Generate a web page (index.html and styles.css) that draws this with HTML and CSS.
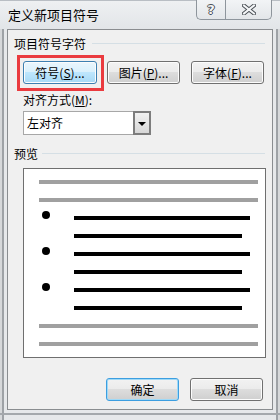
FILE: index.html
```html
<!DOCTYPE html>
<html lang="zh">
<head>
<meta charset="utf-8">
<link rel="stylesheet" href="styles.css">
</head>
<body>
<div class="window">
  <div class="titlebar">
    <span class="title">定义新项目符号</span>
    <div class="caption-btns">
      <div class="cap help">?</div>
      <div class="cap close">
        <svg width="14" height="11" viewBox="0 0 14 11"><path d="M2 1.5 L12 9.5 M12 1.5 L2 9.5" stroke="#4a4f55" stroke-width="4" stroke-linecap="square"/><path d="M2 1.5 L12 9.5 M12 1.5 L2 9.5" stroke="#f4f6f8" stroke-width="2" stroke-linecap="square"/></svg>
      </div>
    </div>
  </div>
  <div class="client">
    <div class="legend"><span>项目符号字符</span><i class="rule"></i></div>
    <div class="btnrow">
      <span class="highlight"><button class="btn hot">符号(<u>S</u>)...</button></span>
      <button class="btn">图片(<u>P</u>)...</button>
      <button class="btn">字体(<u>F</u>)...</button>
    </div>
    <div class="label">对齐方式(<u>M</u>):</div>
    <div class="select">
      <span class="value">左对齐</span>
      <span class="drop"><i class="arrow"></i></span>
    </div>
    <div class="legend legend2"><span>预览</span><i class="rule"></i></div>
    <div class="preview">
      <div class="row"><b class="gray"></b></div>
      <div class="row"><b class="gray"></b></div>
      <div class="row"><i class="dot"></i><b class="long"></b></div>
      <div class="row"><b class="short"></b></div>
      <div class="row"><i class="dot"></i><b class="long"></b></div>
      <div class="row"><b class="short"></b></div>
      <div class="row"><i class="dot"></i><b class="long"></b></div>
      <div class="row"><b class="short"></b></div>
      <div class="row"><b class="gray"></b></div>
      <div class="row"><b class="gray"></b></div>
    </div>
    <div class="footer">
      <button class="btn default">确定</button>
      <button class="btn">取消</button>
    </div>
  </div>
</div>
</body>
</html>
```

FILE: styles.css
```css
* { box-sizing: border-box; }
html, body { margin: 0; padding: 0; }
body {
  width: 280px; height: 420px; overflow: hidden;
  font-family: "Noto Sans CJK SC", "Noto Sans", sans-serif;
  font-size: 12px; color: #000;
}
.window {
  width: 280px; height: 420px;
  background:
    linear-gradient(to bottom, transparent 413px, #a4a8ac 413px, #a4a8ac 415px, transparent 415px),
    linear-gradient(to right, #d6d8da 0, #d6d8da 2px, #9ea2a6 2px, #9ea2a6 4px, #e6e8ea 4px, #e6e8ea 276px, #9ea2a6 276px, #9ea2a6 278px, #d6d8da 278px);
  position: relative;
  display: flex; flex-direction: column;
}
.titlebar {
  height: 29px;
  background: linear-gradient(#eef0f2, #e2e5e8);
  position: relative;
  display: flex; align-items: center;
  padding-left: 8px;
  border-top: 1px solid #b9bec4;
}
.title { font-size: 13px; line-height: 16px; margin-top: -1px; }
.caption-btns {
  position: absolute; top: -1px; right: 8px;
  display: flex; height: 20px;
}
.cap {
  height: 20px; border: 1px solid #8e959c; border-top: none;
  background: linear-gradient(#f2f4f6, #e3e6e9);
  display: flex; align-items: center; justify-content: center;
}
.help {
  width: 29px; border-radius: 0 0 0 5px; border-right: none;
  font-family: "DejaVu Sans", sans-serif; font-weight: bold; font-size: 13px;
  color: #f4f6f8;
  text-shadow: 1px 0 #4a4f55, -1px 0 #4a4f55, 0 1px #4a4f55, 0 -1px #4a4f55;
}
.close { width: 47px; border-radius: 0 0 5px 0; }
.client {
  margin: 0 7px;
  height: 381px;
  background: #f0f0f0;
  border: 1px solid #8a8d90;
  padding: 0 0 0 6px;
  display: flex; flex-direction: column;
}
.legend {
  display: flex; align-items: center;
  margin-top: 5px; height: 16px; padding-right: 7px;
}
.legend .rule { flex: 1; height: 1px; background: #d5dfe5; margin-left: 6px; }
.legend2 { margin-top: 10px; }
.legend2 .rule { margin-left: 4px; }
.btnrow { display: flex; margin-top: 10px; padding-left: 9px; height: 23px; }
.btn {
  font-family: inherit; font-size: 12px; color: #000;
  width: 73px; height: 23px; padding: 0;
  border: 1px solid #707070; border-radius: 3px;
  background: linear-gradient(#f2f2f2 0, #ebebeb 50%, #dddddd 50%, #cfcfcf 100%);
  box-shadow: inset 0 0 0 1px #fcfcfc;
  line-height: 20px;
}
.btn u { text-decoration: underline; text-underline-offset: 1px; }
.btnrow .btn + .btn { margin-left: 11px; }
.btnrow .highlight + .btn { margin-left: 10px; }
.highlight { position: relative; display: block; width: 74px; }
.highlight::after {
  content: ""; position: absolute;
  left: -6px; top: -6px; right: -7px; bottom: -7px;
  border: 3px solid #ea3b3f;
}
.btn.hot {
  width: 74px;
  border-color: #3c7fb1;
  background: linear-gradient(#eaf6fd 0, #d9f0fc 50%, #bee6fd 50%, #a7d9f5 100%);
}
.label { margin-top: 8px; padding-left: 9px; height: 16px; line-height: 16px; }
.select {
  margin: 3px 0 0 9px; width: 128px; height: 24px;
  border: 1px solid #a7a7a7; background: #fff;
  display: flex; align-items: center; justify-content: space-between;
}
.value { padding-left: 3px; line-height: 16px; }
.drop {
  width: 18px; height: 24px; margin: -1px -1px -1px 0;
  border: 2px solid #7d7d7d;
  background: linear-gradient(#f2f2f2, #d7d7d7);
  display: flex; align-items: center; justify-content: center;
}
.arrow { width: 0; height: 0; border-left: 4px solid transparent; border-right: 4px solid transparent; border-top: 4px solid #000; margin-top: 1px; }
.preview {
  margin: 7px 0 0 9px; width: 243px; height: 190px;
  border: 1px solid #6f6f6f; background: #fff;
  padding: 11px 0 0 15px;
  display: flex; flex-direction: column; gap: 14px;
}
.row { display: flex; height: 4px; flex: none; }
.row b { display: block; height: 4px; flex: none; }
.gray { width: 219px; background: #a0a0a0; }
.long { width: 176px; background: #000; }
.short { width: 168px; background: #000; margin-left: 35px; }
.dot { width: 8px; height: 8px; border-radius: 50%; background: #000; margin: -5px 24px 0 3px; flex: none; }
.footer { display: flex; margin-top: 20px; padding-left: 92px; }
.footer .btn + .btn { margin-left: 11px; }
.btn.default {
  border-color: #3c9ee0;
  box-shadow: inset 0 0 0 1px #9fd9f7;
}
```
